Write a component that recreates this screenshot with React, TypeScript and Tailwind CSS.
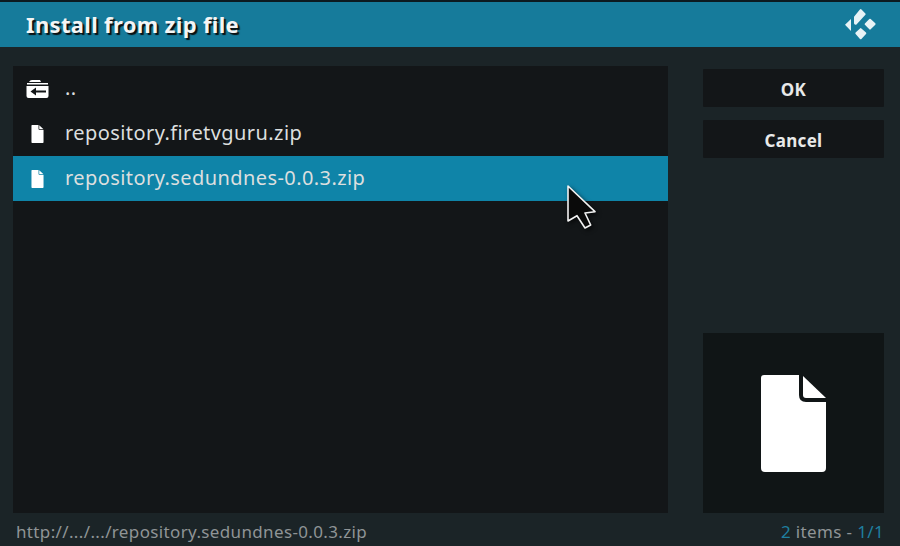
const FONT = "font-['Noto_Sans',sans-serif]";

function FileIcon({ className }: { className: string }) {
  return (
    <svg viewBox="0 0 65 97" className={className} fill="#fff">
      <path d="M3 0H38V20Q38 27 45 27H65V93Q65 97 61 97H4Q0 97 0 93V3Q0 0 3 0Z" />
      <path d="M42 1L65 23H45Q42 23 42 20Z" />
    </svg>
  );
}

function FolderBack() {
  return (
    <svg viewBox="0 0 23 18" className="w-[23px] h-[18px]" fill="#fff">
      <path d="M6 0H14L15 2H3Q4 0 6 0Z" />
      <rect x="1" y="3" width="21" height="1.5" />
      <path fillRule="evenodd" d="M0.5 6H22.5V16Q22.5 18 20.5 18H2.5Q0.5 18 0.5 16ZM4.5 11.5L10 7.5V10.5H20V12.5H10V15.5Z" />
    </svg>
  );
}

function KodiLogo() {
  return (
    <svg viewBox="0 0 33 33" className="w-[33px] h-[33px]" fill="#e8f3f6">
      <path d="M1 16.7L7 11V23Z" />
      <path d="M10 8.7L15.9 1.5Q16.7 0.7 17.5 1.5L21.4 5.4Q22 6 21.4 6.7L12.5 16.4Q11.7 17 10.9 16.6Q10 16 10 15Z" />
      <path d="M20.9 15.4L25.3 11Q26 10.3 26.7 11L31.3 15.3Q32 16 31.3 16.7L26.7 21.3Q26 22 25.3 21.3L20.9 16.7Q20.3 16 20.9 15.4Z" />
      <path d="M11.6 24.6L16 20.4Q16.7 19.7 17.4 20.4L22 24.6Q22.7 25.3 22 26L17.4 31Q16.7 31.7 16 31L11.6 26Q11 25.3 11.6 24.6Z" />
    </svg>
  );
}

function Row({ icon, label, selected }: { icon: React.ReactNode; label: string; selected?: boolean }) {
  return (
    <div className={`h-[45px] flex items-center ${selected ? "bg-[#0f84a8]" : ""}`}>
      <div className="w-[48px] mr-[4px] flex justify-center shrink-0">{icon}</div>
      <span className="text-[20px] tracking-[0.42px] text-[#dcdfdf] whitespace-nowrap pb-[2px]">{label}</span>
    </div>
  );
}

function Btn({ label }: { label: string }) {
  return (
    <div className="h-[38px] bg-[#131618] rounded-[1px] flex items-center justify-center text-[17px] font-bold tracking-[0.3px] text-[#e8e9e9] pt-[3px]">
      {label}
    </div>
  );
}

export default function App() {
  return (
    <div className={`relative w-[900px] h-[546px] overflow-hidden bg-[#1b2427] flex flex-col ${FONT}`}>
      <div className="h-[2px] bg-[#0c1a20] shrink-0" />
      <header className="h-[45px] shrink-0 bg-[#167b9b] flex items-center justify-between pl-[26px] pr-[23px]">
        <h1 className="text-[22px] font-bold tracking-[0.33px] text-[#f3f5f5] [text-shadow:2px_2px_1px_#0b0f10]">Install from zip file</h1>
        <KodiLogo />
      </header>
      <main className="flex-1 flex pl-[13px] pr-[16px] pt-[19px] gap-[35px] min-h-0">
        <section className="w-[655px] bg-[#131618] h-[447px]">
          <Row icon={<FolderBack />} label=".." />
          <Row icon={<FileIcon className="w-[13px] h-[18px]" />} label="repository.firetvguru.zip" />
          <Row icon={<FileIcon className="w-[13px] h-[18px]" />} label="repository.sedundnes-0.0.3.zip" selected />
        </section>
        <aside className="w-[181px] h-[447px] flex flex-col pt-[3px]">
          <div className="flex flex-col gap-[13px]">
            <Btn label="OK" />
            <Btn label="Cancel" />
          </div>
          <div className="mt-auto h-[180px] bg-[#101516] flex items-center justify-center">
            <FileIcon className="w-[65px] h-[97px]" />
          </div>
        </aside>
      </main>
      <footer className="h-[33px] shrink-0 flex items-center justify-between pl-[16px] pr-[16px] text-[17px] tracking-[0.36px] text-[#8f9496] pt-[5px]">
        <span>http://.../.../repository.sedundnes-0.0.3.zip</span>
        <span><span className="text-[#1f7f9f]">2</span> items - <span className="text-[#1f7f9f]">1/1</span></span>
      </footer>
      <svg viewBox="0 0 31 46" className="absolute left-[566px] top-[184px] w-[31px] h-[46px] drop-shadow-[2px_2px_2px_rgba(0,0,0,0.6)]">
        <path d="M2 2V37L11 31.7L19 44L24.7 41L19 29L29 27.7Z" fill="#0a0a0a" stroke="#f2f2f2" strokeWidth="1.6" strokeLinejoin="round" />
      </svg>
    </div>
  );
}
